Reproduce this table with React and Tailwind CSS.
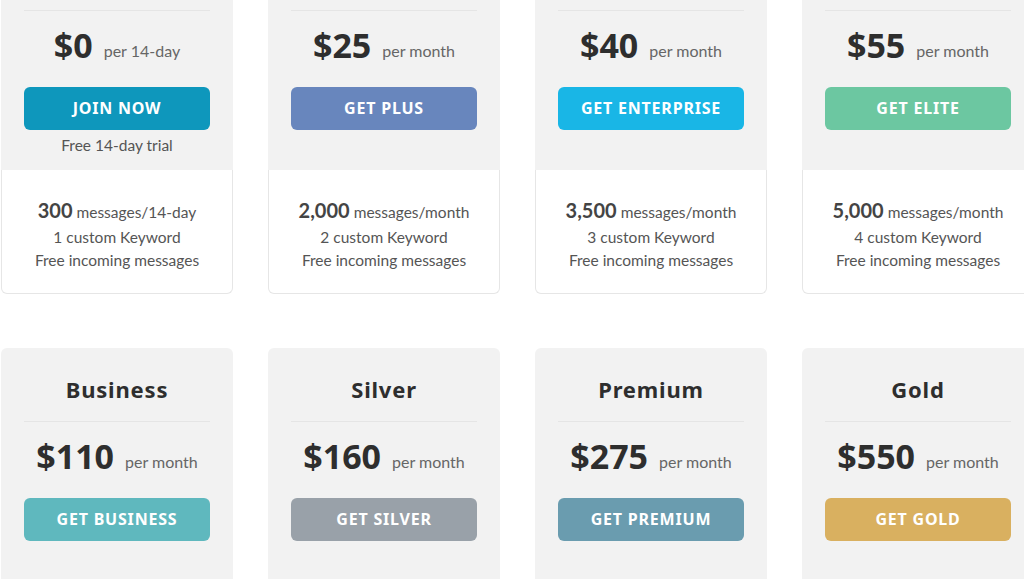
import React from "react";

const HEAD = { fontFamily: '"Noto Sans", "DejaVu Sans", sans-serif' };
const BODY = { fontFamily: 'Lato, "Open Sans", sans-serif' };

const top = [
  { price: "$0", per: "per 14-day", btn: "JOIN NOW", color: "bg-[#0e97bc]", trial: "Free 14-day trial", num: "300", unit: "messages/14-day", kw: "1 custom Keyword" },
  { price: "$25", per: "per month", btn: "GET PLUS", color: "bg-[#6886bd]", num: "2,000", unit: "messages/month", kw: "2 custom Keyword" },
  { price: "$40", per: "per month", btn: "GET ENTERPRISE", color: "bg-[#19b6e6]", num: "3,500", unit: "messages/month", kw: "3 custom Keyword" },
  { price: "$55", per: "per month", btn: "GET ELITE", color: "bg-[#6cc7a1]", num: "5,000", unit: "messages/month", kw: "4 custom Keyword" },
];

const bottom = [
  { title: "Business", price: "$110", per: "per month", btn: "GET BUSINESS", color: "bg-[#5fb8be]" },
  { title: "Silver", price: "$160", per: "per month", btn: "GET SILVER", color: "bg-[#99a1a9]" },
  { title: "Premium", price: "$275", per: "per month", btn: "GET PREMIUM", color: "bg-[#6a9caf]" },
  { title: "Gold", price: "$550", per: "per month", btn: "GET GOLD", color: "bg-[#d9b060]" },
];

function PriceBlock({ p }) {
  return (
    <>
      <div className="mt-[14px] flex h-[40px] items-baseline justify-center gap-[11px]">
        <span style={HEAD} className="text-[34px] font-bold leading-[40px] text-[#2e2e2e]">
          {p.price}
        </span>
        <span style={BODY} className="relative -top-[1px] text-[16px] leading-[20px] text-[#666]">
          {p.per}
        </span>
      </div>
      <div
        style={HEAD}
        className={`mt-[22px] flex h-[43px] items-center justify-center rounded-[6px] pb-[1px] text-[16px] font-bold tracking-[0.8px] text-white ${p.color}`}
      >
        {p.btn}
      </div>
    </>
  );
}

function TopCard({ p }) {
  return (
    <div className="flex w-[232px] shrink-0 flex-col">
      <div className="h-[170px] bg-[#f2f2f2] px-[23px] pt-[10px]">
        <div className="h-px bg-[#e5e5e5]" />
        <PriceBlock p={p} />
        {p.trial && (
          <div style={BODY} className="mt-[5px] text-center text-[15.5px] leading-[20px] text-[#555]">
            {p.trial}
          </div>
        )}
      </div>
      <div
        style={BODY}
        className="h-[124px] rounded-b-[6px] border border-t-0 border-[#e6e6e6] bg-white pt-[27px] text-center text-[15.5px] text-[#555]"
      >
        <div className="leading-[26px]">
          <span className="text-[20px] font-bold text-[#444]">{p.num}</span> {p.unit}
        </div>
        <div className="leading-[24px]">{p.kw}</div>
        <div className="leading-[23px]">Free incoming messages</div>
      </div>
    </div>
  );
}

function BottomCard({ p }) {
  return (
    <div className="h-[260px] w-[232px] shrink-0 rounded-t-[6px] bg-[#f2f2f2] px-[23px] pt-[26px]">
      <div style={HEAD} className="text-center text-[22px] font-bold leading-[30px] tracking-[0.8px] text-[#2e2e2e]">
        {p.title}
      </div>
      <div className="mt-[17px] h-px bg-[#e5e5e5]" />
      <PriceBlock p={p} />
    </div>
  );
}

export default function App() {
  return (
    <div className="h-[579px] w-[1024px] overflow-hidden bg-white">
      <div className="flex gap-[35px] pl-[1px]">
        {top.map((p) => (
          <TopCard key={p.btn} p={p} />
        ))}
      </div>
      <div className="mt-[54px] flex gap-[35px] pl-[1px]">
        {bottom.map((p) => (
          <BottomCard key={p.btn} p={p} />
        ))}
      </div>
    </div>
  );
}
